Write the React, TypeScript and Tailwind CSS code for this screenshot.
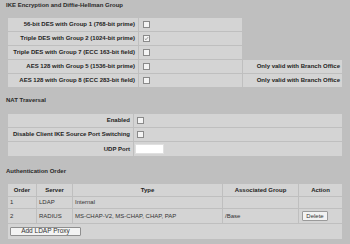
import type { ReactNode } from "react";

const ikeRows = [
  { label: "56-bit DES with Group 1 (768-bit prime)", checked: false, note: "" },
  { label: "Triple DES with Group 2 (1024-bit prime)", checked: true, note: "" },
  { label: "Triple DES with Group 7 (ECC 163-bit field)", checked: false, note: "" },
  { label: "AES 128 with Group 5 (1536-bit prime)", checked: false, note: "Only valid with Branch Office" },
  { label: "AES 128 with Group 8 (ECC 283-bit field)", checked: false, note: "Only valid with Branch Office" },
];

function Box({ checked = false }: { checked?: boolean }) {
  return (
    <span className="flex h-[7px] w-[7px] items-center justify-center border border-[#8a8a8a] bg-[#f4f4f4]">
      {checked && (
        <svg viewBox="0 0 6 6" className="h-[5px] w-[5px]">
          <path d="M1 3.2 L2.4 4.5 L5 1.3" fill="none" stroke="#777" strokeWidth="0.9" />
        </svg>
      )}
    </span>
  );
}

function Heading({ children }: { children: ReactNode }) {
  return <div className="pl-[6px] text-[6px] leading-[8px] font-bold text-[#2a2a2a]">{children}</div>;
}

function Cell({ children, className = "" }: { children?: ReactNode; className?: string }) {
  return <div className={`flex items-center bg-[#d4d4d4] ${className}`}>{children}</div>;
}

export default function App() {
  return (
    <div
      className="h-[244px] w-[350px] overflow-hidden bg-[#bfbfbf] pt-[1px] text-[#1e1e1e]"
      style={{ fontFamily: '"Liberation Sans", Arial, sans-serif' }}
    >
      {/* IKE */}
      <Heading>IKE Encryption and Diffie-Hellman Group</Heading>
      <div className="mt-[9px] ml-[8px] grid grid-cols-[130px_103px_99px] gap-[1px]">
        {ikeRows.map((r) => (
          <>
            <Cell className="h-[13px] justify-end pr-[3px] text-[6px] font-bold">{r.label}</Cell>
            <Cell className="h-[13px] pl-[4px]">
              <Box checked={r.checked} />
            </Cell>
            {r.note ? (
              <Cell className="h-[13px] justify-end pr-[2px] text-[6px] font-bold">{r.note}</Cell>
            ) : (
              <div />
            )}
          </>
        ))}
      </div>

      {/* NAT */}
      <div className="mt-[9px]">
        <Heading>NAT Traversal</Heading>
      </div>
      <div className="mt-[10px] ml-[8px] grid w-[334px] grid-cols-[125px_1fr] gap-[1px] text-[6px] font-bold">
        <Cell className="h-[13px] justify-end pr-[3px]">Enabled</Cell>
        <Cell className="h-[13px] pl-[3px]">
          <Box />
        </Cell>
        <Cell className="h-[13px] justify-end pr-[3px]">Disable Client IKE Source Port Switching</Cell>
        <Cell className="h-[13px] pl-[3px]">
          <Box />
        </Cell>
        <Cell className="h-[14px] justify-end pr-[3px]">UDP Port</Cell>
        <Cell className="h-[14px] pl-[1px]">
          <span className="h-[10px] w-[29px] border border-[#e0e0e0] bg-white" />
        </Cell>
      </div>

      {/* Auth order */}
      <div className="mt-[11px]">
        <Heading>Authentication Order</Heading>
      </div>
      <div className="mt-[9px] ml-[8px] grid w-[334px] grid-cols-[28px_35px_149px_75px_1fr] gap-[1px] text-[6px]">
        <Cell className="h-[12px] justify-center font-bold">Order</Cell>
        <Cell className="h-[12px] justify-center font-bold">Server</Cell>
        <Cell className="h-[12px] justify-center font-bold">Type</Cell>
        <Cell className="h-[12px] justify-center font-bold">Associated Group</Cell>
        <Cell className="h-[12px] justify-center font-bold">Action</Cell>

        <Cell className="h-[11px] pl-[2px] text-[#333]">1</Cell>
        <Cell className="h-[11px] pl-[2px] text-[#333]">LDAP</Cell>
        <Cell className="h-[11px] pl-[2px] text-[#333]">Internal</Cell>
        <Cell className="h-[11px]" />
        <Cell className="h-[11px]" />

        <Cell className="h-[14px] pl-[2px] text-[#333]">2</Cell>
        <Cell className="h-[14px] pl-[2px] text-[#333]">RADIUS</Cell>
        <Cell className="h-[14px] pl-[2px] text-[#333]">MS-CHAP-V2, MS-CHAP, CHAP, PAP</Cell>
        <Cell className="h-[14px] pl-[2px] text-[#333]">/Base</Cell>
        <Cell className="h-[14px] pl-[3px]">
          <button className="h-[10px] w-[26px] rounded-[1px] border border-[#9a9a9a] bg-[#f2f2f2] text-[6px] leading-none text-[#333]">
            Delete
          </button>
        </Cell>

        <Cell className="col-span-5 h-[15px] pl-[2px]">
          <button className="h-[9px] w-[71px] rounded-[1px] border border-[#8f8f8f] bg-[#f3f3f3] text-[6.5px] leading-none text-[#333]">
            Add LDAP Proxy
          </button>
        </Cell>
      </div>
    </div>
  );
}
